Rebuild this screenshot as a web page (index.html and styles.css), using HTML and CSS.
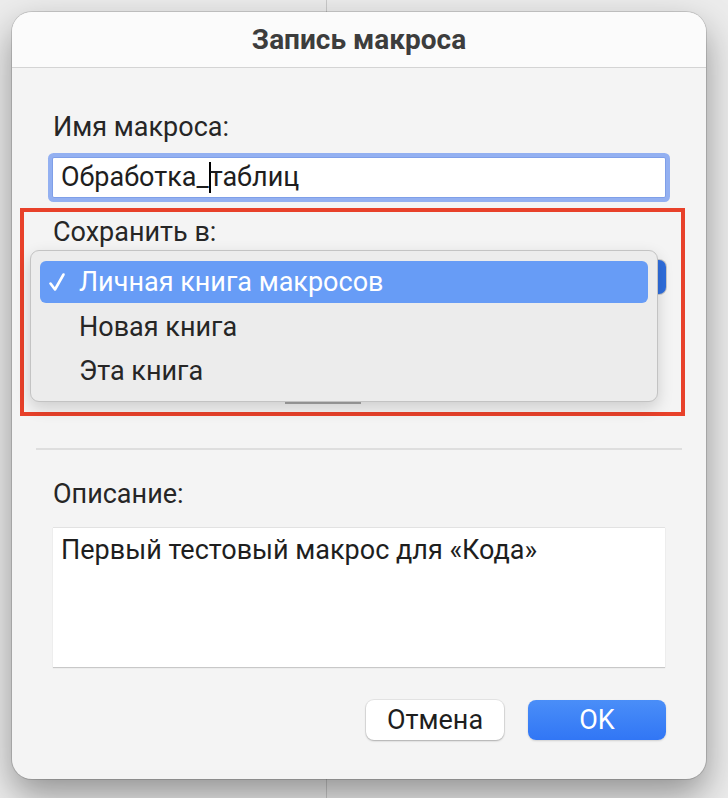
FILE: index.html
```html
<!DOCTYPE html>
<html lang="ru">
<head>
    <meta charset="UTF-8">
    <meta name="viewport" content="width=device-width, initial-scale=1.0">
    <title>Запись макроса</title>
    <link rel="stylesheet" href="styles.css">
</head>
<body>
    <div class="dialog">
        <div class="dialog-header">Запись макроса</div>

        <div class="dialog-body">
            <div class="field-label">Имя макроса:</div>
            <div class="text-field">Обработка_<span class="caret"></span>таблиц</div>

            <div class="highlight-box">
                <div class="field-label">Сохранить в:</div>
                <div class="popup-button"></div>
                <div class="popup-tail"></div>

                <!-- открытое меню поверх кнопки -->
                <ul class="popup-menu">
                    <li class="menu-item selected">
                        <svg class="check" width="18" height="20" viewBox="0 0 18 20">
                            <path d="M2.5 11.5 L7 17.5 L15.5 2.5" fill="none" stroke="#fff" stroke-width="2.6" stroke-linecap="round" stroke-linejoin="round"/>
                        </svg>
                        Личная книга макросов
                    </li>
                    <li class="menu-item">Новая книга</li>
                    <li class="menu-item">Эта книга</li>
                </ul>
            </div>

            <div class="separator"></div>

            <div class="field-label desc-label">Описание:</div>
            <div class="text-area">Первый тестовый макрос для «Кода»</div>

            <div class="buttons">
                <button class="btn btn-cancel">Отмена</button>
                <button class="btn btn-ok">OK</button>
            </div>
        </div>
    </div>
</body>
</html>
```

FILE: styles.css
```css
body {
    margin: 0;
    padding: 12px;
    font-family: Roboto, 'Liberation Sans', sans-serif;
    color: #262626;
    /* фон окна позади диалога с вертикальной линией */
    background: linear-gradient(to right, transparent 326px, #c9c9c9 326px, #c9c9c9 327px, transparent 327px), #ececec;
    height: 798px;
    box-sizing: border-box;
    overflow: hidden;
}

.dialog {
    width: 694px;
    height: 767px;
    background: #f4f4f4;
    border-radius: 20px;
    overflow: hidden;
    box-shadow: 0 0 0 1px rgba(0, 0, 0, 0.14), 0 16px 36px rgba(0, 0, 0, 0.38);
}

.dialog-header {
    height: 55px;
    line-height: 56px;
    border-bottom: 1px solid #d4d4d4;
    background: #fbfbfb;
    text-align: center;
    font-size: 28px;
    font-weight: 700;
    color: #3d3d3d;
}

.dialog-body {
    padding: 46px 40px 0 41px;
}

.field-label {
    font-size: 27px;
    line-height: 26px;
    color: #262626;
}

.text-field {
    margin-top: 17px;
    margin-left: -1px;
    width: 614px;
    height: 41px;
    box-sizing: border-box;
    padding-left: 8px;
    background: #fff;
    border: 1px solid #7f9fe8;
    border-radius: 2px;
    box-shadow: 0 0 0 4px #93b0f1;
    font-size: 27px;
    line-height: 39px;
    color: #1e1e1e;
}

.caret {
    display: inline-block;
    width: 2px;
    height: 31px;
    background: #000;
    vertical-align: middle;
    margin: -3px -1px 0 0;
}

.highlight-box {
    position: relative;
    margin-top: 10px;
    margin-left: -33px;
    width: 665px;
    height: 208px;
    box-sizing: border-box;
    border: 4px solid #e8412a;
    padding: 7px 0 0 29px;
}

.popup-button {
    margin-top: 15px;
    margin-left: -1px;
    width: 614px;
    height: 34px;
    border-radius: 7px;
    background: #2f6edd;
    box-shadow: 0 0 0 1px #c9c9c9;
}

.popup-tail {
    margin-top: 108px;
    margin-left: 232px;
    width: 76px;
    height: 2px;
    background: #a6a6a6;
}

.popup-menu {
    position: absolute;
    left: 6px;
    top: 38px;
    width: 628px;
    height: 152px;
    box-sizing: border-box;
    margin: 0;
    padding: 10px 9px;
    list-style: none;
    background: #ececec;
    border: 1px solid #c3c3c3;
    border-radius: 9px;
    box-shadow: 0 6px 16px rgba(0, 0, 0, 0.16);
}

.menu-item {
    display: flex;
    align-items: center;
    height: 44px;
    padding-left: 39px;
    border-radius: 6px;
    font-size: 27px;
    color: #262626;
}

.menu-item.selected {
    height: 42px;
    padding-left: 8px;
    background: #679cf6;
    color: #fff;
    margin-bottom: 2px;
}

.check {
    margin-right: 13px;
}

.separator {
    margin-top: 32px;
    margin-left: -17px;
    width: 646px;
    height: 2px;
    background: #dedede;
}

.desc-label {
    margin-top: 31px;
}

.text-area {
    margin-top: 20px;
    width: 612px;
    height: 140px;
    box-sizing: border-box;
    padding: 8px 8px;
    background: #fff;
    border-top: 1px solid #e2e2e2;
    box-shadow: 0 1px 1px rgba(0, 0, 0, 0.18);
    font-size: 27px;
    line-height: 28px;
    color: #1e1e1e;
}

.buttons {
    display: flex;
    justify-content: flex-end;
    gap: 24px;
    margin-top: 33px;
}

.btn {
    width: 138px;
    height: 40px;
    border: none;
    border-radius: 8px;
    font-family: inherit;
    font-size: 27px;
    padding: 0;
}

.btn-cancel {
    background: #fff;
    color: #1e1e1e;
    box-shadow: 0 0 0 1px rgba(0, 0, 0, 0.06), 0 1px 2px rgba(0, 0, 0, 0.25);
}

.btn-ok {
    background: linear-gradient(#4a8ef8, #3176f5);
    color: #fff;
    box-shadow: 0 1px 2px rgba(0, 0, 0, 0.15);
}
```
